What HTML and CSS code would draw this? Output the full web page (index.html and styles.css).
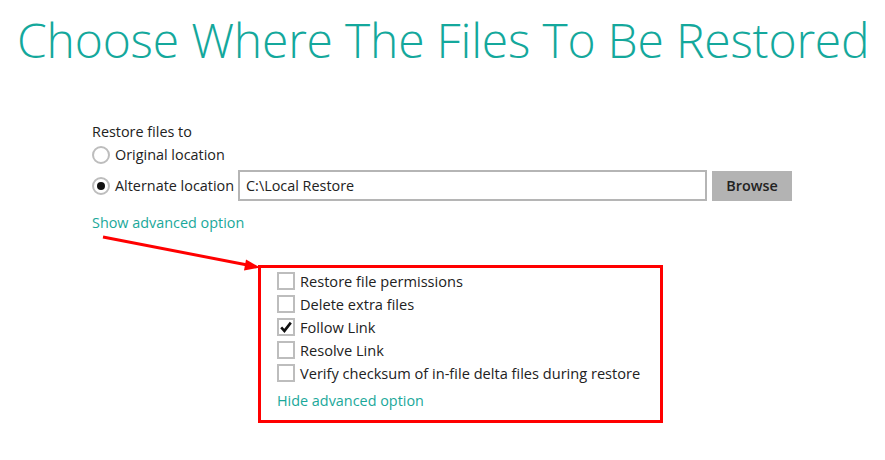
FILE: index.html
```html
<!DOCTYPE html>
<html>
<head>
<meta charset="utf-8">
<link rel="stylesheet" href="styles.css">
</head>
<body>
<h1 class="title">Choose Where The Files To Be Restored</h1>
<div class="content">
  <div class="label">Restore files to</div>
  <div class="radio-row">
    <span class="radio"></span><span>Original location</span>
  </div>
  <div class="radio-row alt">
    <span class="radio checked"></span><span>Alternate location</span>
    <div class="path-input">C:\Local Restore</div>
    <div class="browse">Browse</div>
  </div>
  <div class="link show">Show advanced option</div>
  <div class="advanced">
    <div class="check-row"><span class="checkbox"></span><span>Restore file permissions</span></div>
    <div class="check-row"><span class="checkbox"></span><span>Delete extra files</span></div>
    <div class="check-row"><span class="checkbox"><svg viewBox="0 0 14 14" width="14" height="14"><path d="M2.2 7.4 L5.4 10.9 L11.8 2.6" fill="none" stroke="#111" stroke-width="2.6"/></svg></span><span>Follow Link</span></div>
    <div class="check-row"><span class="checkbox"></span><span>Resolve Link</span></div>
    <div class="check-row"><span class="checkbox"></span><span>Verify checksum of in-file delta files during restore</span></div>
    <div class="link hide">Hide advanced option</div>
  </div>
</div>
<svg class="arrow" width="885" height="460" viewBox="0 0 885 460">
  <line x1="103" y1="237" x2="250" y2="265.5" stroke="#ff0000" stroke-width="3"/>
  <polygon points="260,267.5 246,259.5 244,270.5" fill="#ff0000"/>
</svg>
</body>
</html>
```
FILE: styles.css
```css
html, body {
  margin: 0;
  padding: 0;
  background: #ffffff;
}
body {
  font-family: "Open Sans", sans-serif;
  font-size: 14.4px;
  color: #222;
  width: 885px;
  height: 460px;
  position: relative;
  overflow: hidden;
}
.title {
  margin: 0;
  padding: 10px 0 0 17px;
  font-size: 48px;
  font-weight: 300;
  line-height: 60px;
  letter-spacing: -0.2px;
  color: #14a89c;
  white-space: nowrap;
}
.content {
  padding: 52px 0 0 92px;
  display: flex;
  flex-direction: column;
  align-items: flex-start;
}
.label {
  line-height: 20px;
}
.radio-row {
  display: flex;
  align-items: center;
  height: 25px;
}
.radio-row.alt {
  height: 31px;
  margin-top: 3px;
}
.radio {
  box-sizing: border-box;
  width: 18px;
  height: 18px;
  border: 2px solid #bdbdbd;
  border-radius: 50%;
  margin-right: 5px;
  display: flex;
  align-items: center;
  justify-content: center;
}
.radio.checked::after {
  content: "";
  width: 8px;
  height: 8px;
  border-radius: 50%;
  background: #111;
}
.path-input {
  box-sizing: border-box;
  width: 469px;
  height: 31px;
  margin-left: 4px;
  border: 2px solid #b5b5b5;
  padding-left: 6px;
  line-height: 27px;
}
.browse {
  width: 80px;
  height: 30px;
  margin-left: 5px;
  background: #b3b3b3;
  color: #222;
  font-weight: 600;
  display: flex;
  align-items: center;
  justify-content: center;
}
.link {
  color: #1aa89a;
  line-height: 20px;
}
.show {
  margin-top: 12px;
}
.advanced {
  box-sizing: border-box;
  width: 405px;
  height: 158px;
  margin: 32px 0 0 166px;
  border: 3px solid #ff0000;
  padding: 1px 0 0 16px;
  display: flex;
  flex-direction: column;
}
.check-row {
  display: flex;
  align-items: center;
  height: 23px;
  font-size: 14.6px;
}
.checkbox {
  box-sizing: border-box;
  width: 18px;
  height: 18px;
  border: 2px solid #bdbdbd;
  margin-right: 5px;
  display: flex;
  align-items: center;
  justify-content: center;
}
.hide {
  margin-top: 7px;
}
.arrow {
  position: absolute;
  left: 0;
  top: 0;
  pointer-events: none;
}
```
